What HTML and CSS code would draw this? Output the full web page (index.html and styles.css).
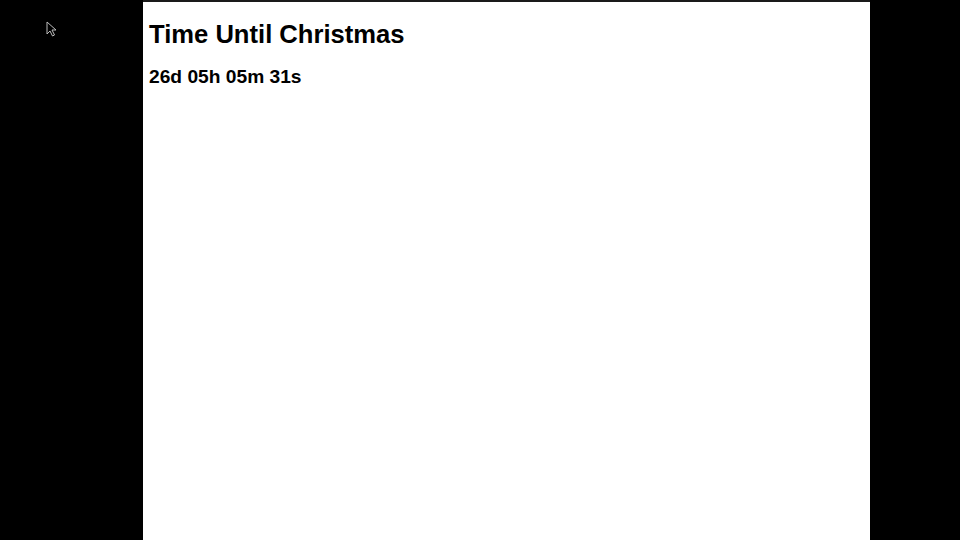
FILE: index.html
```html
<!DOCTYPE html>
<html>
<head>
<meta charset="utf-8">
<link rel="stylesheet" href="styles.css">
</head>
<body>
<div class="stage">
  <svg class="cursor" width="12" height="16" viewBox="0 0 12 16">
    <path d="M1 1 L1 13 L4 10 L6.5 15 L8.5 14 L6 9 L10 9 Z" fill="#000" stroke="#bbb" stroke-width="1"/>
  </svg>
  <main class="page">
    <h1 class="title">Time Until Christmas</h1>
    <div class="countdown">26d 05h 05m 31s</div>
  </main>
</div>
</body>
</html>
```
FILE: styles.css
```css
html, body {
  margin: 0;
  padding: 0;
  background: #000;
  width: 960px;
  height: 540px;
  overflow: hidden;
}
.stage {
  position: relative;
  width: 960px;
  height: 540px;
  display: flex;
  justify-content: flex-start;
  padding-left: 143px;
  padding-top: 2px;
  box-sizing: border-box;
  background: linear-gradient(#1a1a1a, #1a1a1a) 143px 0 / 727px 2px no-repeat, #000;
}
.page {
  width: 727px;
  height: 538px;
  background: #fff;
  box-sizing: border-box;
  padding: 17px 6px 0;
  font-family: "Liberation Sans", Arial, sans-serif;
  color: #000;
}
.title {
  margin: 0;
  font-size: 25.6px;
  font-weight: bold;
  line-height: 30px;
}
.countdown {
  margin-top: 17px;
  font-size: 19.2px;
  font-weight: bold;
  line-height: 22px;
}
.cursor {
  position: absolute;
  left: 46px;
  top: 21px;
}
```
